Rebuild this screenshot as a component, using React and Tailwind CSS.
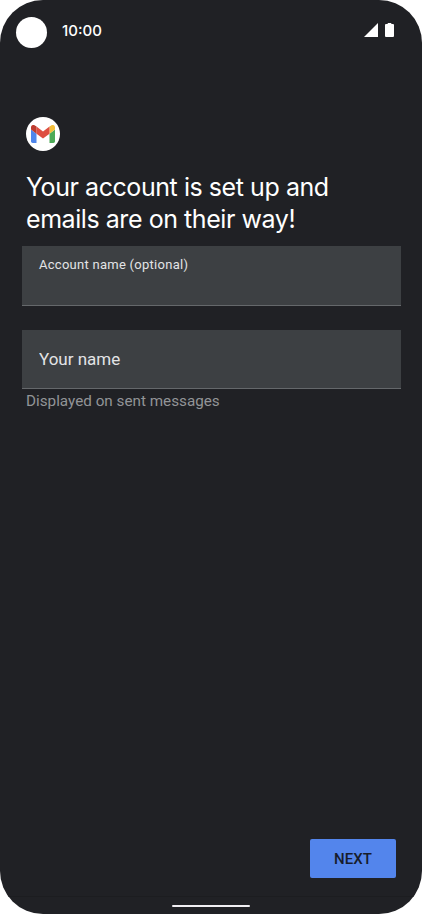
import React, { useState } from 'react';

const GmailLogo = () => (
  <svg viewBox="0 0 24 18" className="w-6 h-[18px]">
    <path d="M1.65 18H5.5V8.7L0 4.6v11.75C0 17.3.75 18 1.65 18z" fill="#4f86ec" />
    <path d="M18.5 18h3.85c.9 0 1.65-.75 1.65-1.65V4.6l-5.5 4.1z" fill="#4caa57" />
    <path d="M18.5 1.6v7.1L24 4.6V2.4C24 .4 21.7-.8 20.1.4z" fill="#f4bf3b" />
    <path d="M5.5 8.7V1.6L12 6.5l6.5-4.9v7.1L12 13.6z" fill="#de4f42" />
    <path d="M0 2.4v2.2l5.5 4.1V1.6L3.9.4C2.3-.8 0 .4 0 2.4z" fill="#bd3b2f" />
  </svg>
);

const StatusBar = () => (
  <header className="flex h-16 items-center pl-4 pr-[28px]">
    <div className="h-[31px] w-[31px] rounded-full bg-white" />
    <span className="ml-[15px] -mt-[3px] font-['Inter',sans-serif] text-[15px] font-medium leading-5">
      10:00
    </span>
    <div className="ml-auto -mt-[5px] flex items-center gap-[7px]">
      <svg viewBox="0 0 14 14" className="h-3.5 w-3.5">
        <path d="M14 0v14H0z" fill="#fff" />
      </svg>
      <svg viewBox="0 0 9 14" className="h-3.5 w-[9px]">
        <path d="M2.7 0h3.6v1H8a1 1 0 0 1 1 1v11a1 1 0 0 1-1 1H1a1 1 0 0 1-1-1V2a1 1 0 0 1 1-1h1.7z" fill="#fff" />
      </svg>
    </div>
  </header>
);

const App = () => {
  const [accountName, setAccountName] = useState('');
  const [name, setName] = useState('');

  return (
    <div className="h-[914px] w-[422px] bg-white">
      <div className="flex h-full w-full flex-col overflow-hidden rounded-[43px] bg-[#202125] font-['Roboto',sans-serif] text-white">
        <StatusBar />

        <main className="flex flex-1 flex-col pt-[53px]">
          <div className="ml-[26px] flex h-[34px] w-[34px] items-center justify-center rounded-full bg-white">
            <GmailLogo />
          </div>

          <h1 className="ml-[26px] mt-5 whitespace-nowrap font-['Inter',sans-serif] text-[25px] font-normal leading-8 tracking-[-0.44px]">
            Your account is set up and
            <br />
            emails are on their way!
          </h1>

          {/* Account name */}
          <label className="ml-[22px] mr-[21px] mt-[11px] flex h-[60px] flex-col border-b border-[#65686b] bg-[#3d4043] px-[17px] pt-[10px]">
            <span className="text-[13px] leading-[18px] tracking-[0.27px] text-[#e3e4e6]">Account name (optional)</span>
            <input
              value={accountName}
              onChange={(e) => setAccountName(e.target.value)}
              className="h-6 w-full bg-transparent text-base outline-none"
            />
          </label>

          {/* Display name */}
          <label className="ml-[22px] mr-[21px] mt-6 flex h-[59px] items-center border-b border-[#65686b] bg-[#3d4043] px-[17px]">
            <input
              value={name}
              onChange={(e) => setName(e.target.value)}
              placeholder="Your name"
              className="w-full bg-transparent text-[17px] leading-6 outline-none placeholder:text-[#e3e4e6]"
            />
          </label>
          <p className="ml-[26px] mt-[2px] text-[15.25px] leading-5 text-[#929497]">Displayed on sent messages</p>

          <button className="mb-[18px] ml-auto mr-[26px] mt-auto h-[39px] w-[86px] rounded-[2px] bg-[#5385ec] pt-px text-[15px] font-medium tracking-[0.1px] text-[#171c2b]">
            NEXT
          </button>
        </main>

        {/* Gesture bar */}
        <footer className="flex h-[18px] justify-center border-t border-[#1c1d20] pt-[8px]">
          <div className="h-[2px] w-[78px] rounded-full bg-[#f1eff3]" />
        </footer>
      </div>
    </div>
  );
};

export default App;
